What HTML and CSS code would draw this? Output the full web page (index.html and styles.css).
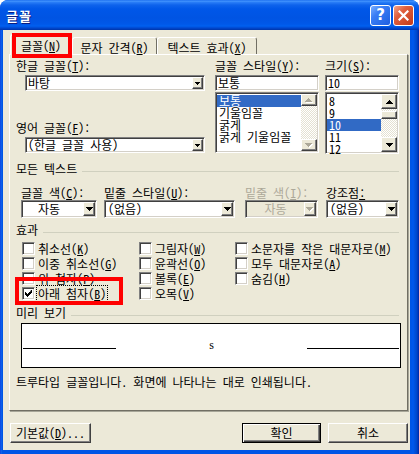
FILE: index.html
```html
<!DOCTYPE html>
<html lang="ko">
<head>
<meta charset="utf-8">
<title>글꼴</title>
<link rel="stylesheet" href="styles.css">
</head>
<body>
<div class="window">
  <div class="titlebar">
    <span class="title">글꼴</span>
    <span class="tbtn help">?</span>
    <span class="tbtn close"><svg width="11" height="11" viewBox="0 0 11 11"><path d="M1.5 1.5L9.5 9.5M9.5 1.5L1.5 9.5" stroke="#fff" stroke-width="2.2" stroke-linecap="square"/></svg></span>
  </div>
  <div class="client">
    <div class="tabs">
      <div class="tab sel">글꼴(<u>N</u>)</div>
      <div class="tab t2">문자 간격(<u>R</u>)</div>
      <div class="tab t3">텍스트 효과(<u>X</u>)</div>
      <div class="mark tabmark"></div>
    </div>
    <div class="panel">
      <div class="fonts">
        <div class="fcol left">
          <div class="lbl">한글 글꼴(<u>T</u>):</div>
          <div class="combo sm kor"><span class="val">바탕</span><span class="dd"><svg width="5" height="3" viewBox="0 0 5 3"><path d="M0 0h5v1h-1v1h-1v1h-1v-1h-1v-1h-1z"/></svg></span></div>
          <div class="lbl eng">영어 글꼴(<u>F</u>):</div>
          <div class="combo sm kor"><span class="val">(한글 글꼴 사용)</span><span class="dd"><svg width="5" height="3" viewBox="0 0 5 3"><path d="M0 0h5v1h-1v1h-1v1h-1v-1h-1v-1h-1z"/></svg></span></div>
        </div>
        <div class="fcol mid">
          <div class="lbl">글꼴 스타일(<u>Y</u>):</div>
          <div class="edit">보통</div>
          <div class="list">
            <div class="items">
              <div class="item on">보통</div>
              <div class="item">기울임꼴</div>
              <div class="item">굵게</div>
              <div class="item">굵게 기울임꼴</div>
            </div>
            <div class="sb">
              <div class="sbtn s12"><svg width="8" height="5" viewBox="0 0 8 5"><path fill="#fff" d="M4 1h1v1h1v1h1v1h1v1h-7v-1h1v-1h1v-1h1z"/><path fill="#ACA899" d="M3 0h1v1h1v1h1v1h1v1h-7v-1h1v-1h1v-1h1z"/></svg></div>
              <div class="track"></div>
              <div class="sbtn s12"><svg width="8" height="5" viewBox="0 0 8 5"><path fill="#fff" d="M1 1h7v1h-1v1h-1v1h-1v1h-1v-1h-1v-1h-1v-1h-1z"/><path fill="#ACA899" d="M0 0h7v1h-1v1h-1v1h-1v1h-1v-1h-1v-1h-1v-1h-1z"/></svg></div>
            </div>
          </div>
        </div>
        <div class="fcol right">
          <div class="lbl">크기(<u>S</u>):</div>
          <div class="edit">10</div>
          <div class="list">
            <div class="items">
              <div class="item">8</div>
              <div class="item">9</div>
              <div class="item on">10</div>
              <div class="item">11</div>
              <div class="item">12</div>
            </div>
            <div class="sb">
              <div class="sbtn s15"><svg width="7" height="4" viewBox="0 0 7 4"><path d="M3 0h1v1h1v1h1v1h1v1h-7v-1h1v-1h1v-1h1z"/></svg></div>
              <div class="track short"></div>
              <div class="thumb"></div>
              <div class="track"></div>
              <div class="sbtn s15"><svg width="7" height="4" viewBox="0 0 7 4"><path d="M0 0h7v1h-1v1h-1v1h-1v1h-1v-1h-1v-1h-1v-1h-1z"/></svg></div>
            </div>
          </div>
        </div>
      </div>

      <div class="gh all">모든 텍스트</div>
      <div class="textopts">
        <div class="tcol c1">
          <div class="lbl">글꼴 색(<u>C</u>):</div>
          <div class="combo md"><span class="val auto">자동</span><span class="dd"><svg width="7" height="4" viewBox="0 0 7 4"><path d="M0 0h7v1h-1v1h-1v1h-1v1h-1v-1h-1v-1h-1v-1h-1z"/></svg></span></div>
        </div>
        <div class="tcol c2">
          <div class="lbl">밑줄 스타일(<u>U</u>):</div>
          <div class="combo md"><span class="val">(없음)</span><span class="dd"><svg width="7" height="4" viewBox="0 0 7 4"><path d="M0 0h7v1h-1v1h-1v1h-1v1h-1v-1h-1v-1h-1v-1h-1z"/></svg></span></div>
        </div>
        <div class="tcol c3">
          <div class="lbl dis">밑줄 색(<u>I</u>):</div>
          <div class="combo md off"><span class="val center">자동</span><span class="dd"><svg width="8" height="5" viewBox="0 0 8 5"><path fill="#fff" d="M1 1h7v1h-1v1h-1v1h-1v1h-1v-1h-1v-1h-1v-1h-1z"/><path fill="#ACA899" d="M0 0h7v1h-1v1h-1v1h-1v1h-1v-1h-1v-1h-1v-1h-1z"/></svg></span></div>
        </div>
        <div class="tcol c4">
          <div class="lbl">강조점<u>:</u></div>
          <div class="combo md"><span class="val">(없음)</span><span class="dd"><svg width="7" height="4" viewBox="0 0 7 4"><path d="M0 0h7v1h-1v1h-1v1h-1v1h-1v-1h-1v-1h-1v-1h-1z"/></svg></span></div>
        </div>
      </div>

      <div class="gh fx">효과</div>
      <div class="effects">
        <div class="cb"><span class="box"></span><span class="txt">취소선(<u>K</u>)</span></div>
        <div class="cb"><span class="box"></span><span class="txt">그림자(<u>W</u>)</span></div>
        <div class="cb"><span class="box"></span><span class="txt">소문자를 작은 대문자로(<u>M</u>)</span></div>
        <div class="cb"><span class="box"></span><span class="txt">이중 취소선(<u>G</u>)</span></div>
        <div class="cb"><span class="box"></span><span class="txt">윤곽선(<u>O</u>)</span></div>
        <div class="cb"><span class="box"></span><span class="txt">모두 대문자로(<u>A</u>)</span></div>
        <div class="cb"><span class="box"></span><span class="txt">위 첨자(<u>P</u>)</span></div>
        <div class="cb"><span class="box"></span><span class="txt">볼록(<u>E</u>)</span></div>
        <div class="cb"><span class="box"></span><span class="txt">숨김(<u>H</u>)</span></div>
        <div class="cb"><span class="box"><svg width="7" height="7" viewBox="0 0 7 7"><path d="M6 0h1v3h-1v1h-1v1h-1v1h-1v1h-1v-1h-1v-1h-1v-3h1v1h1v1h1v-1h1v-1h1z"/></svg></span><span class="txt focus">아래 첨자(<u>B</u>)</span></div>
        <div class="cb"><span class="box"></span><span class="txt">오목(<u>V</u>)</span></div>
        <div class="mark fxmark"></div>
      </div>

      <div class="gh pv">미리 보기</div>
      <div class="preview">
        <span class="pl pl-l"></span>
        <span class="sample">s</span>
        <span class="pl pl-r"></span>
      </div>
      <div class="desc">트루타입 글꼴입니다. 화면에 나타나는 대로 인쇄됩니다.</div>
    </div>
    <div class="buttons">
      <div class="btn b-def">기본값(<u>D</u>)...</div>
      <div class="spacer"></div>
      <div class="btn b-ok">확인</div>
      <div class="btn b-cancel">취소</div>
    </div>
  </div>
</div>
</body>
</html>
```
FILE: styles.css
```css
* { box-sizing: border-box; }
html, body { margin: 0; padding: 0; background: #fff; }
body {
  font-family: "Noto Sans Mono CJK KR", "Noto Sans CJK KR", sans-serif;
  font-size: 12px;
  line-height: 12px;
  color: #000;
}
u { text-decoration: underline; text-underline-offset: 1px; }

.window {
  width: 419px;
  height: 454px;
  display: flex;
  flex-direction: column;
  border-radius: 8px 8px 0 0;
  overflow: hidden;
  background: linear-gradient(to right, #0831D9 0, #166AEE 1px, #0055E5 2px, #0055E5 411px, #0058EE 413px, #0046C8 417px, #0025A8 419px);
}

.titlebar {
  height: 30px;
  flex: none;
  display: flex;
  align-items: flex-start;
  padding: 5px 5px 0 6px;
  background: linear-gradient(to bottom, #0A5EEA 0, #4A9BFF 1px, #2C80F8 2px, #0E63EC 5px, #0057E8 9px, #0054E3 18px, #0058E9 24px, #0060F0 26px, #0048D0 28px, #0034A8 30px);
}
.title {
  flex: 1;
  color: #fff;
  font-family: "Noto Sans CJK KR", sans-serif;
  font-weight: bold;
  font-size: 13px;
  line-height: 14px;
  letter-spacing: 1px;
  margin-top: 4px;
  text-shadow: 1px 1px 0 #0A1D80;
}
.tbtn {
  width: 21px;
  height: 21px;
  border: 1px solid #fff;
  border-radius: 3px;
  display: flex;
  align-items: center;
  justify-content: center;
}
.help {
  margin-right: 2px;
  background: linear-gradient(135deg, #7BB0FF 0, #3A7EF5 35%, #1F5EE0 100%);
  color: #fff;
  font-family: "DejaVu Sans", sans-serif;
  font-weight: bold;
  font-size: 15px;
  line-height: 15px;
}
.close {
  background: linear-gradient(135deg, #F2A48A 0, #E0603E 35%, #C53A18 100%);
}

.client {
  flex: 1;
  margin: 0 9px 4px 3px;
  background: #ECE9D8;
}

/* tabs */
.tabs {
  position: relative;
  z-index: 1;
  display: flex;
  align-items: flex-end;
  height: 24px;
  padding-left: 7px;
}
.tab {
  height: 17px;
  border: 1px solid;
  border-bottom: 0;
  border-color: #fff #716F64 #716F64 #fff;
  border-radius: 3px 3px 0 0;
  padding-top: 4px;
  text-align: center;
  white-space: nowrap;
  background: #ECE9D8;
}
.tab.sel { width: 62px; height: 21px; margin-bottom: -1px; padding-top: 5px; }
.tab.t2 { width: 85px; }
.tab.t3 { width: 100px; }

.mark {
  position: absolute;
  border: 4px solid #FF0000;
  z-index: 3;
}
.tabmark { left: 9px; top: 3px; width: 60px; height: 25px; }

/* panel */
.panel {
  margin-left: 6px;
  width: 399px;
  height: 357px;
  border: 1px solid;
  border-color: #fff #716F64 #716F64 #fff;
  box-shadow: 1px 1px 0 #A7A698;
}

.lbl { height: 12px; line-height: 12px; white-space: nowrap; }
.lbl.dis { color: #ACA899; }

.fonts { display: flex; padding-left: 6px; height: 98px; }
.fcol { display: flex; flex-direction: column; }
.fcol .lbl:first-child { margin-top: 5px; }
.left { width: 189px; }
.mid { width: 104px; margin-left: 10px; }
.right { width: 74px; margin-left: 6px; }
.lbl.eng { margin-top: 31px; }

.combo, .edit, .list {
  background: #fff;
  border: 1px solid;
  border-color: #808080 #fff #fff #808080;
  box-shadow: inset 1px 1px 0 #404040, inset -1px -1px 0 #D4D0C8;
  padding: 1px;
}
.combo { display: flex; margin-top: 3px; }
.combo.sm { height: 16px; }
.combo.kor { margin-left: 9px; width: 180px; }
.combo .val { flex: 1; padding-left: 1px; white-space: nowrap; }
.combo.sm .val { line-height: 12px; }
.dd {
  display: flex;
  align-items: center;
  justify-content: center;
  background: #ECE9D8;
  border: 1px solid;
  border-color: #fff #404040 #404040 #fff;
  box-shadow: inset -1px -1px 0 #808080;
}
.combo.sm .dd { width: 11px; }
.combo.md { height: 18px; margin-top: 1px; }
.combo.md .val { line-height: 14px; padding-left: 2px; }
.combo.md .val.auto { padding-left: 15px; }
.combo.md .val.center { text-align: center; padding-left: 0; }
.combo.md .dd { width: 12px; }
.combo.off { background: #ECE9D8; }
.combo.off .val { color: #ACA899; }

.edit { height: 16px; margin-top: 3px; padding-left: 2px; line-height: 12px; }

.list { display: flex; height: 62px; margin-top: 1px; }
.items { flex: 1; padding-top: 1px; }
.item { height: 12px; line-height: 12px; padding-left: 2px; white-space: nowrap; }
.item.on { background: #316AC5; color: #fff; }
.sb { width: 16px; display: flex; flex-direction: column; }
.sbtn {
  display: flex;
  align-items: center;
  justify-content: center;
  background: #ECE9D8;
  border: 1px solid;
  border-color: #fff #404040 #404040 #fff;
  box-shadow: inset -1px -1px 0 #808080;
}
.sbtn.s12 { height: 12px; }
.sbtn.s15 { height: 15px; }
.track {
  flex: 1;
  background: repeating-conic-gradient(#fff 0 25%, #E4E1D2 0 50%) 0 0 / 2px 2px;
}
.track.short { flex: none; height: 2px; }
.thumb {
  height: 8px;
  background: #ECE9D8;
  border: 1px solid;
  border-color: #fff #404040 #404040 #fff;
  box-shadow: inset -1px -1px 0 #808080;
}

/* group headers */
.gh {
  display: flex;
  align-items: center;
  height: 12px;
  line-height: 12px;
  margin-left: 6px;
  margin-right: 8px;
  white-space: nowrap;
}
.gh::after {
  content: "";
  flex: 1;
  border-top: 1px solid #D0D0BF;
  margin-left: 5px;
  margin-top: 4px;
}
.gh.all { margin-top: 10px; }
.gh.fx { margin-top: 6px; }
.gh.pv { margin-top: 5px; }

.textopts { display: flex; margin-top: 12px; }
.tcol { display: flex; flex-direction: column; }
.c1 { margin-left: 11px; width: 76px; }
.c2 { margin-left: 7px; width: 131px; }
.c3 { margin-left: 10px; width: 73px; }
.c4 { margin-left: 8px; width: 73px; }

/* effects */
.effects {
  position: relative;
  display: grid;
  grid-template-columns: 117px 96px auto;
  grid-auto-rows: 15px;
  padding-left: 12px;
  margin-top: 6px;
}
.cb { display: flex; align-items: flex-start; white-space: nowrap; }
.box {
  width: 13px;
  height: 13px;
  flex: none;
  background: #fff;
  border: 1px solid;
  border-color: #808080 #fff #fff #808080;
  box-shadow: inset 1px 1px 0 #404040, inset -1px -1px 0 #D4D0C8;
  margin-right: 3px;
  display: flex;
  align-items: center;
  justify-content: center;
}
.cb .txt { line-height: 13px; }
.cb .txt.focus {
  outline: 1px dotted #000;
  outline-offset: 1px;
}
.fxmark { left: 5px; top: 35px; width: 108px; height: 28px; }

/* preview */
.preview {
  display: flex;
  align-items: flex-start;
  margin: 4px 0 0 11px;
  width: 380px;
  height: 45px;
  border: 1px solid #000;
  background: #fff;
}
.pl { height: 1px; background: #000; margin-top: 24px; }
.pl-l { width: 93px; margin-left: 1px; }
.pl-r { width: 92px; margin-right: 1px; }
.sample {
  flex: 1;
  text-align: center;
  font-family: "Liberation Serif", serif;
  font-size: 12px;
  line-height: 12px;
  margin-top: 15px;
}
.desc { margin: 8px 0 0 6px; white-space: nowrap; }

/* buttons */
.buttons { display: flex; margin-top: 12px; padding-left: 7px; padding-right: 2px; }
.spacer { flex: 1; }
.btn {
  height: 20px;
  display: flex;
  align-items: center;
  justify-content: center;
  background: #ECE9D8;
  border: 1px solid;
  border-color: #fff #404040 #404040 #fff;
  box-shadow: inset -1px -1px 0 #808080;
  white-space: nowrap;
}
.b-def { width: 81px; }
.b-ok {
  width: 79px;
  margin-right: 7px;
  border-color: #000;
  box-shadow: inset 1px 1px 0 #fff, inset -1px -1px 0 #404040, inset -2px -2px 0 #808080;
}
.b-cancel { width: 80px; }
```
